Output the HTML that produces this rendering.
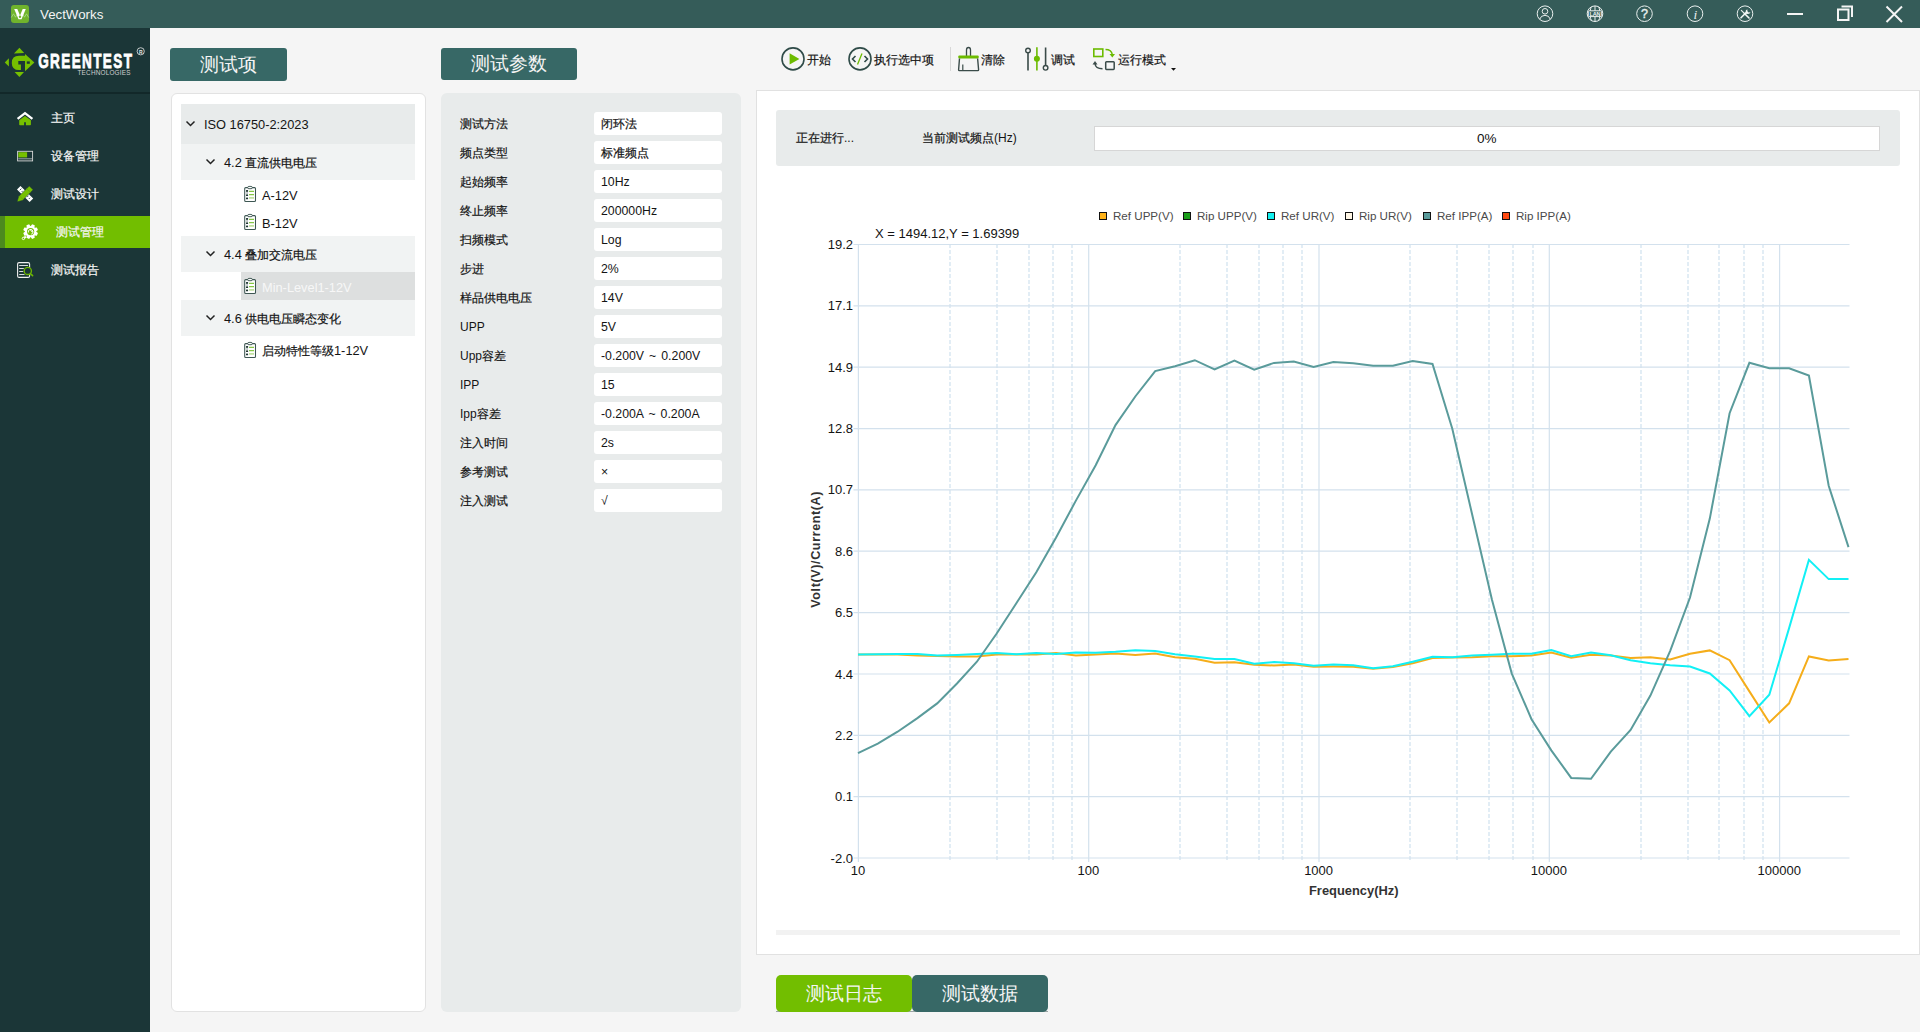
<!DOCTYPE html>
<html><head><meta charset="utf-8">
<style>
*{box-sizing:border-box;margin:0;padding:0}
html,body{width:1920px;height:1032px;overflow:hidden;background:#F5F5F5;font-family:"Liberation Sans",sans-serif;color:#111}
.a{position:absolute}
.t{position:absolute;white-space:nowrap;line-height:1}
#title{left:0;top:0;width:1920px;height:28px;background:#355C59}
#side{left:0;top:28px;width:150px;height:1004px;background:#1B3637}
.nav{position:absolute;left:0;width:150px;height:32px}
.nav .t{left:51px;top:10px;font-size:12.2px;color:#F6F6F6;-webkit-text-stroke:0.15px #F6F6F6}
.nk .k{-webkit-text-stroke:0}
.btnh{position:absolute;background:#376866;border-radius:3px;color:#F4F4F4;font-size:19px}
.tree{left:171px;top:93px;width:255px;height:919px;background:#fff;border:1px solid #E2E2E2;border-radius:6px}
.row{position:absolute;left:181px;width:234px}
.tx{font-size:12.8px;color:#141414}
.c{font-size:12px}
.param{left:441px;top:93px;width:300px;height:919px;background:#E8EBEB;border-radius:6px}
.lab{position:absolute;left:460px;font-size:12px;color:#141414}
.val{position:absolute;left:594px;width:128px;height:23px;background:#fff;border-radius:3px}
.val .t{left:7px;top:6px;font-size:12.3px;color:#141414;word-spacing:1.6px}
.tb{font-size:12px;color:#141414}
svg{position:absolute;left:0;top:0}
.mn{stroke:#E2EDF5;stroke-width:2;stroke-dasharray:4 2}
.mj{stroke:#D3E1ED;stroke-width:1.2}
.ln{fill:none;stroke-width:2;stroke-linejoin:miter}
.ax{font-size:13px;color:#141414}
.lg{font-size:11.6px;color:#4A4A4A}
.k{-webkit-text-stroke:0.2px currentColor}
</style></head><body>
<div id="title" class="a">
      <div class="t" style="left:40px;top:8px;font-size:13.3px;color:#F4F4F4">VectWorks</div>
</div>
<div id="side" class="a">
  <div class="a" style="left:0;top:64px;width:150px;height:2px;background:#122829"></div>
      <div class="nav" style="top:74px"><div class="t"><span class="k">主页</span></div></div>
  <div class="nav" style="top:112px"><div class="t"><span class="k">设备管理</span></div></div>
  <div class="nav" style="top:150px"><div class="t"><span class="k">测试设计</span></div></div>
  <div class="nav" style="top:188px;background:#72BE00"><div class="a" style="left:0;top:0;width:5px;height:32px;background:#4C8A1E"></div><div class="t" style="left:56px"><span class="k">测试管理</span></div></div>
  <div class="nav" style="top:226px"><div class="t"><span class="k">测试报告</span></div></div>
</div>

<div class="btnh nk" style="left:170px;top:48px;width:117px;height:33px"><div class="t" style="left:30px;top:7px"><span class="k">测试项</span></div></div>
<div class="btnh nk" style="left:441px;top:48px;width:136px;height:32px"><div class="t" style="left:30px;top:6px"><span class="k">测试参数</span></div></div>

<div class="a tree"></div>
<div class="row" style="top:104px;height:40px;background:#E8EBEB"><div class="t tx" style="left:23px;top:15px">ISO 16750-2:2023</div></div>
<div class="row" style="top:144px;height:36px;background:#F1F3F3"><div class="t tx" style="left:43px;top:13px">4.2 <span class="c"><span class="k">直流供电电压</span></span></div></div>
<div class="row" style="top:180px;height:28px"><div class="t tx" style="left:81px;top:9.5px">A-12V</div></div>
<div class="row" style="top:208px;height:28px"><div class="t tx" style="left:81px;top:9.5px">B-12V</div></div>
<div class="row" style="top:236px;height:36px;background:#F1F3F3"><div class="t tx" style="left:43px;top:13px">4.4 <span class="c"><span class="k">叠加交流电压</span></span></div></div>
<div class="row" style="top:272px;height:28px;left:241px;width:174px;background:#DDDFDF"><div class="t tx" style="left:21px;top:9.5px;color:#F7F7F7">Min-Level1-12V</div></div>
<div class="row" style="top:300px;height:36px;background:#F1F3F3"><div class="t tx" style="left:43px;top:13px">4.6 <span class="c"><span class="k">供电电压瞬态变化</span></span></div></div>
<div class="row" style="top:336px;height:28px"><div class="t tx" style="left:81px;top:9px"><span class="c"><span class="k">启动特性等级</span></span>1-12V</div></div>

<div class="a param"></div>
<div class="lab t" style="top:118px"><span class="k">测试方法</span></div><div class="val" style="top:112px"><div class="t"><span class="k">闭环法</span></div></div>
<div class="lab t" style="top:147px"><span class="k">频点类型</span></div><div class="val" style="top:141px"><div class="t"><span class="k">标准频点</span></div></div>
<div class="lab t" style="top:176px"><span class="k">起始频率</span></div><div class="val" style="top:170px"><div class="t">10Hz</div></div>
<div class="lab t" style="top:205px"><span class="k">终止频率</span></div><div class="val" style="top:199px"><div class="t">200000Hz</div></div>
<div class="lab t" style="top:234px"><span class="k">扫频模式</span></div><div class="val" style="top:228px"><div class="t">Log</div></div>
<div class="lab t" style="top:263px"><span class="k">步进</span></div><div class="val" style="top:257px"><div class="t">2%</div></div>
<div class="lab t" style="top:292px"><span class="k">样品供电电压</span></div><div class="val" style="top:286px"><div class="t">14V</div></div>
<div class="lab t" style="top:321px">UPP</div><div class="val" style="top:315px"><div class="t">5V</div></div>
<div class="lab t" style="top:350px">Upp<span class="k">容差</span></div><div class="val" style="top:344px"><div class="t">-0.200V ~ 0.200V</div></div>
<div class="lab t" style="top:379px">IPP</div><div class="val" style="top:373px"><div class="t">15</div></div>
<div class="lab t" style="top:408px">Ipp<span class="k">容差</span></div><div class="val" style="top:402px"><div class="t">-0.200A ~ 0.200A</div></div>
<div class="lab t" style="top:437px"><span class="k">注入时间</span></div><div class="val" style="top:431px"><div class="t">2s</div></div>
<div class="lab t" style="top:466px"><span class="k">参考测试</span></div><div class="val" style="top:460px"><div class="t">×</div></div>
<div class="lab t" style="top:495px"><span class="k">注入测试</span></div><div class="val" style="top:489px"><div class="t">√</div></div>

<!-- toolbar -->
<div class="t tb" style="left:807px;top:53.5px"><span class="k">开始</span></div>
<div class="t tb" style="left:874px;top:53.5px"><span class="k">执行选中项</span></div>
<div class="a" style="left:950px;top:47px;width:1px;height:24px;background:#D8D8D8"></div>
<div class="t tb" style="left:981px;top:53.5px"><span class="k">清除</span></div>
<div class="t tb" style="left:1051px;top:53.5px"><span class="k">调试</span></div>
<div class="t tb" style="left:1118px;top:53.5px"><span class="k">运行模式</span></div>

<!-- chart panel -->
<div class="a" style="left:756px;top:90px;width:1164px;height:865px;background:#fff;border:1px solid #E1E1E1"></div>
<div class="a" style="left:776px;top:110px;width:1124px;height:56px;background:#E8EBEB;border-radius:3px"></div>
<div class="t tb" style="left:796px;top:132px"><span class="k">正在进行</span>...</div>
<div class="t tb" style="left:922px;top:132px"><span class="k">当前测试频点</span>(Hz)</div>
<div class="a" style="left:1094px;top:126px;width:786px;height:25px;background:#fff;border:1px solid #D6D6D6"></div>
<div class="t" style="left:1477px;top:131.5px;font-size:13.5px">0%</div>
<div class="a" style="left:776px;top:930px;width:1124px;height:5px;background:#F2F2F2"></div>

<svg width="1920" height="1032">
<line x1="950" y1="244" x2="950" y2="862.0" class="mn"/>
<line x1="997" y1="244" x2="997" y2="862.0" class="mn"/>
<line x1="1029" y1="244" x2="1029" y2="862.0" class="mn"/>
<line x1="1053" y1="244" x2="1053" y2="862.0" class="mn"/>
<line x1="1072" y1="244" x2="1072" y2="862.0" class="mn"/>
<line x1="1180" y1="244" x2="1180" y2="862.0" class="mn"/>
<line x1="1227" y1="244" x2="1227" y2="862.0" class="mn"/>
<line x1="1259" y1="244" x2="1259" y2="862.0" class="mn"/>
<line x1="1283" y1="244" x2="1283" y2="862.0" class="mn"/>
<line x1="1302" y1="244" x2="1302" y2="862.0" class="mn"/>
<line x1="1410" y1="244" x2="1410" y2="862.0" class="mn"/>
<line x1="1457" y1="244" x2="1457" y2="862.0" class="mn"/>
<line x1="1489" y1="244" x2="1489" y2="862.0" class="mn"/>
<line x1="1513" y1="244" x2="1513" y2="862.0" class="mn"/>
<line x1="1533" y1="244" x2="1533" y2="862.0" class="mn"/>
<line x1="1641" y1="244" x2="1641" y2="862.0" class="mn"/>
<line x1="1688" y1="244" x2="1688" y2="862.0" class="mn"/>
<line x1="1719" y1="244" x2="1719" y2="862.0" class="mn"/>
<line x1="1744" y1="244" x2="1744" y2="862.0" class="mn"/>
<line x1="1763" y1="244" x2="1763" y2="862.0" class="mn"/>
<line x1="858.4" y1="244.5" x2="858.4" y2="862.0" class="mj"/>
<line x1="1088.7" y1="244.5" x2="1088.7" y2="862.0" class="mj"/>
<line x1="1319.0" y1="244.5" x2="1319.0" y2="862.0" class="mj"/>
<line x1="1549.3" y1="244.5" x2="1549.3" y2="862.0" class="mj"/>
<line x1="1779.6" y1="244.5" x2="1779.6" y2="862.0" class="mj"/>
<line x1="853.5" y1="244.5" x2="1849.5" y2="244.5" class="mj"/>
<line x1="853.5" y1="305.9" x2="1849.5" y2="305.9" class="mj"/>
<line x1="853.5" y1="367.2" x2="1849.5" y2="367.2" class="mj"/>
<line x1="853.5" y1="428.6" x2="1849.5" y2="428.6" class="mj"/>
<line x1="853.5" y1="489.9" x2="1849.5" y2="489.9" class="mj"/>
<line x1="853.5" y1="551.2" x2="1849.5" y2="551.2" class="mj"/>
<line x1="853.5" y1="612.6" x2="1849.5" y2="612.6" class="mj"/>
<line x1="853.5" y1="674.0" x2="1849.5" y2="674.0" class="mj"/>
<line x1="853.5" y1="735.3" x2="1849.5" y2="735.3" class="mj"/>
<line x1="853.5" y1="796.6" x2="1849.5" y2="796.6" class="mj"/>
<line x1="853.5" y1="858.0" x2="1849.5" y2="858.0" class="mj"/>
<polyline class="ln" stroke="#F5AD1A" points="858.0,654.6 877.8,654.5 897.6,654.6 917.4,655.6 937.2,656.0 957.0,656.5 976.9,656.5 996.7,654.5 1016.5,654.4 1036.3,654.5 1056.1,653.0 1075.9,655.6 1095.7,654.4 1115.5,653.5 1135.3,654.9 1155.2,653.5 1175.0,657.3 1194.8,658.7 1214.6,662.7 1234.4,662.3 1254.2,664.8 1274.0,665.5 1293.8,664.4 1313.6,666.7 1333.4,666.5 1353.2,666.7 1373.1,668.7 1392.9,667.0 1412.7,663.3 1432.5,658.0 1452.3,657.5 1472.1,657.2 1491.9,656.3 1511.7,656.2 1531.5,655.5 1551.3,652.5 1571.2,657.8 1591.0,654.7 1610.8,655.5 1630.6,658.0 1650.4,657.3 1670.2,659.4 1690.0,653.8 1709.8,650.4 1729.6,660.2 1749.4,691.4 1769.3,722.5 1789.1,703.3 1808.9,656.4 1828.7,660.6 1848.5,658.9"/>
<polyline class="ln" stroke="#12F0F5" points="858.0,654.6 877.8,654.2 897.6,654.1 917.4,654.0 937.2,655.6 957.0,654.9 976.9,654.1 996.7,653.0 1016.5,654.2 1036.3,653.1 1056.1,654.0 1075.9,652.5 1095.7,652.8 1115.5,651.8 1135.3,650.3 1155.2,651.1 1175.0,654.2 1194.8,656.5 1214.6,659.0 1234.4,659.0 1254.2,663.7 1274.0,662.1 1293.8,663.3 1313.6,665.7 1333.4,664.5 1353.2,665.3 1373.1,668.3 1392.9,666.3 1412.7,661.7 1432.5,656.7 1452.3,657.2 1472.1,655.5 1491.9,654.7 1511.7,653.8 1531.5,653.8 1551.3,650.0 1571.2,656.3 1591.0,652.5 1610.8,655.3 1630.6,660.2 1650.4,663.2 1670.2,665.3 1690.0,666.6 1709.8,673.5 1729.6,690.5 1749.4,716.1 1769.3,694.8 1789.1,628.1 1808.9,559.9 1828.7,579.1 1848.5,579.1"/>
<polyline class="ln" stroke="#5A9B9B" points="858.0,753.1 877.8,743.7 897.6,731.7 917.4,718.1 937.2,703.4 957.0,683.5 976.9,661.7 996.7,633.5 1016.5,603.0 1036.3,572.2 1056.1,537.5 1075.9,500.6 1095.7,465.3 1115.5,425.1 1135.3,396.5 1155.2,371.1 1175.0,366.2 1194.8,360.2 1214.6,369.4 1234.4,360.7 1254.2,369.7 1274.0,362.9 1293.8,361.5 1313.6,367.0 1333.4,362.1 1353.2,363.2 1373.1,365.8 1392.9,365.8 1412.7,361.0 1432.5,364.0 1452.3,428.8 1472.1,514.2 1491.9,599.6 1511.7,673.3 1531.5,719.2 1551.3,750.4 1571.2,777.9 1591.0,778.8 1610.8,751.7 1630.6,729.9 1650.4,695.6 1670.2,650.8 1690.0,597.5 1709.8,518.6 1729.6,413.2 1749.4,362.8 1769.3,368.3 1789.1,368.3 1808.9,375.6 1828.7,485.7 1848.5,547.1"/>

</svg>

<div class="t ax" style="left:803px;width:50px;text-align:right;top:238.0px">19.2</div>
<div class="t ax" style="left:803px;width:50px;text-align:right;top:299.4px">17.1</div>
<div class="t ax" style="left:803px;width:50px;text-align:right;top:360.7px">14.9</div>
<div class="t ax" style="left:803px;width:50px;text-align:right;top:422.1px">12.8</div>
<div class="t ax" style="left:803px;width:50px;text-align:right;top:483.4px">10.7</div>
<div class="t ax" style="left:803px;width:50px;text-align:right;top:544.7px">8.6</div>
<div class="t ax" style="left:803px;width:50px;text-align:right;top:606.1px">6.5</div>
<div class="t ax" style="left:803px;width:50px;text-align:right;top:667.5px">4.4</div>
<div class="t ax" style="left:803px;width:50px;text-align:right;top:728.8px">2.2</div>
<div class="t ax" style="left:803px;width:50px;text-align:right;top:790.1px">0.1</div>
<div class="t ax" style="left:803px;width:50px;text-align:right;top:851.5px">-2.0</div>
<div class="t ax" style="left:818.0px;width:80px;text-align:center;top:864px">10</div>
<div class="t ax" style="left:1048.3px;width:80px;text-align:center;top:864px">100</div>
<div class="t ax" style="left:1278.6px;width:80px;text-align:center;top:864px">1000</div>
<div class="t ax" style="left:1508.9px;width:80px;text-align:center;top:864px">10000</div>
<div class="t ax" style="left:1739.2px;width:80px;text-align:center;top:864px">100000</div>
<div class="a" style="left:1099px;top:212px;width:8px;height:8px;background:#FFB31A;border:1px solid #111"></div><div class="t lg" style="left:1113px;top:209.5px">Ref UPP(V)</div>
<div class="a" style="left:1183px;top:212px;width:8px;height:8px;background:#1A9F1A;border:1px solid #111"></div><div class="t lg" style="left:1197px;top:209.5px">Rip UPP(V)</div>
<div class="a" style="left:1267px;top:212px;width:8px;height:8px;background:#12F0F0;border:1px solid #111"></div><div class="t lg" style="left:1281px;top:209.5px">Ref UR(V)</div>
<div class="a" style="left:1345px;top:212px;width:8px;height:8px;background:#FFF6E5;border:1px solid #111"></div><div class="t lg" style="left:1359px;top:209.5px">Rip UR(V)</div>
<div class="a" style="left:1423px;top:212px;width:8px;height:8px;background:#5A9B9B;border:1px solid #111"></div><div class="t lg" style="left:1437px;top:209.5px">Ref IPP(A)</div>
<div class="a" style="left:1502px;top:212px;width:8px;height:8px;background:#FF4A12;border:1px solid #111"></div><div class="t lg" style="left:1516px;top:209.5px">Rip IPP(A)</div>
<div class="t ax" style="left:875px;top:227px">X = 1494.12,Y = 1.69399</div>
<div class="t" style="left:1309px;top:884.5px;font-size:12.9px;font-weight:bold;color:#333">Frequency(Hz)</div>
<div class="t" style="left:759px;top:544px;width:115px;text-align:center;font-size:12.6px;letter-spacing:0.6px;font-weight:bold;color:#333;transform:rotate(-90deg)">Volt(V)/Current(A)</div>

<svg width="1920" height="1032" style="z-index:5;pointer-events:none">
<!-- app icon -->
<rect x="11" y="5" width="18" height="18" rx="3" fill="#70B42C"/>
<path d="M11.3 17.5 L13.5 13.8 L15.5 17.2 L17.5 13.5 L20 17.5 L22.5 13.5 L24.5 17.2 L26.5 13.8 L28.7 17.5" fill="none" stroke="#A9D98A" stroke-width="0.8"/>
<path d="M14.2 9 L17.3 9 L20 15.5 L22.7 9 L25.8 9 L21.5 19.3 L18.5 19.3 Z" fill="#fff"/>
<circle cx="20" cy="16.8" r="1.2" fill="#70B42C"/>
<!-- title bar icons -->
<g fill="none" stroke="#EAF0EF" stroke-width="1">
<circle cx="1545" cy="13.7" r="7.8"/>
<circle cx="1545" cy="11.3" r="2.8"/>
<path d="M1539.6 19.3 Q1541 15.3 1545 15.3 Q1549 15.3 1550.4 19.3"/>
<circle cx="1595" cy="13.7" r="7.8"/>
<rect x="1588.3" y="10.8" width="13.4" height="5.8" rx="0.8"/><path d="M1595 6 V10.8 M1595 16.6 V21.5 M1591.3 7.3 Q1590.3 8.8 1590.3 10.8 M1598.7 7.3 Q1599.7 8.8 1599.7 10.8 M1591.3 20.1 Q1590.3 18.6 1590.3 16.6 M1598.7 20.1 Q1599.7 18.6 1599.7 16.6"/>
<circle cx="1644.5" cy="13.7" r="7.8"/>
<circle cx="1695" cy="13.7" r="7.8"/>
<circle cx="1745" cy="13.7" r="7.8"/>
</g>
<text x="1595" y="15.8" font-family="Liberation Sans" font-size="5.6" font-weight="bold" fill="#EAF0EF" text-anchor="middle" textLength="11">LAN</text>
<text x="1644.5" y="18.2" font-family="Liberation Sans" font-size="12.5" fill="#EAF0EF" stroke="#EAF0EF" stroke-width="0.4" text-anchor="middle">?</text>
<text x="1695.5" y="18.8" font-family="Liberation Serif" font-size="13.5" font-style="italic" fill="#EAF0EF" text-anchor="middle">i</text>
<path d="M1741.3 10.3 L1745 14" stroke="#EAF0EF" stroke-width="1.1" stroke-linecap="round"/>
<path d="M1744.5 13.5 L1749 18" stroke="#F4F8F7" stroke-width="1.6" stroke-linecap="round"/>
<path d="M1741 17.8 L1746.5 12.3" stroke="#F4F8F7" stroke-width="1.6" stroke-linecap="round"/>
<path d="M1745.6 13.2 L1745.8 10.6 L1747.3 9.2 L1747.4 11.3 L1748.6 12.4 L1750.6 12.3 L1749.2 13.8 L1746.6 14 Z" fill="#F4F8F7"/>
<g stroke="#F4F4F4" stroke-width="2" fill="none">
<path d="M1787 14 H1803"/>
<rect x="1838" y="9.5" width="10.5" height="10.5"/>
<path d="M1841.5 6.5 H1852 V17"/>
</g>
<path d="M1886.5 6.5 L1902 22 M1902 6.5 L1886.5 22" stroke="#F4F4F4" stroke-width="2"/>

<!-- logo -->
<g fill="#76C000">
<path d="M19.4 47.8 L24.2 52.9 L14 53.5 Z"/>
<path d="M4.8 62.4 L8.9 58.3 L8.9 66.5 Z"/>
<path d="M25 54 L34.4 62.4 L25 71.2 Z"/>
<path d="M14.6 72 L24 72 L19.4 77.1 Z"/>
<path d="M19 55.8 H26 V61 H18.3 V64.4 H20.9 V70 H19 Q11.8 70 11.8 62.9 Q11.8 55.8 19 55.8 Z"/>
</g>
<rect x="26.8" y="61.4" width="3" height="2.4" fill="#1B3637"/>
<text x="38.2" y="68.3" font-family="Liberation Sans" font-size="20.5" font-weight="bold" fill="#fff" stroke="#fff" stroke-width="0.8" transform="translate(38.2 0) scale(0.66 1) translate(-38.2 0)" textLength="142">GREENTEST</text>
<text x="77.5" y="74.9" font-family="Liberation Sans" font-size="6.4" fill="#D0D0D0" textLength="53">TECHNOLOGIES</text>
<circle cx="140.7" cy="51.3" r="3.6" fill="none" stroke="#E8E8E8" stroke-width="0.8"/>
<text x="140.7" y="53.5" font-family="Liberation Sans" font-size="5" font-weight="bold" fill="#E8E8E8" text-anchor="middle">R</text>

<!-- nav icons -->
<path d="M17.6 118.9 L25 113.1 L32.4 118.9" fill="none" stroke="#fff" stroke-width="2.3" stroke-linejoin="miter"/>
<path d="M19.2 120.2 L25 115.9 L30.9 120.2 V124.4 Q30.9 125.2 30.1 125.2 H25.9 V122.2 H24.1 V125.2 H20 Q19.2 125.2 19.2 124.4 Z" fill="#76C000"/>
<rect x="17.6" y="151.3" width="15" height="9.6" fill="none" stroke="#D8D8D8" stroke-width="0.9"/>
<rect x="18.3" y="152.2" width="8.8" height="5.2" fill="#76C000"/>
<path d="M18.3 158.8 H32" stroke="#D8D8D8" stroke-width="0.7"/>
<!-- pencil ruler -->
<path d="M17 189.6 L20.5 186 L33.2 198.5 L29.6 202 Z" fill="#fff"/>
<path d="M19.8 190.2 l1.6 -1.6 M21.6 192 l1.2 -1.2 M27 197.2 l1.6 -1.6 M28.8 199 l1.2 -1.2" stroke="#1B3637" stroke-width="0.8"/>
<path d="M29.3 186 L33.1 189.8 L22.4 200.4 L17.1 201.8 L18.6 196.6 Z" fill="#76C000" stroke="#1B3637" stroke-width="0.5"/>
<path d="M26.6 188.6 L30.4 192.4 M19.4 195.8 L23.2 199.6" stroke="#5E9A10" stroke-width="0.6"/>
<!-- gear (active) -->
<g>
<path d="M30.85 225.91 L32.10 224.25 L34.74 225.35 L34.45 227.40 L34.80 227.75 L36.85 227.46 L37.95 230.10 L36.29 231.35 L36.29 231.85 L37.95 233.10 L36.85 235.74 L34.80 235.45 L34.45 235.80 L34.74 237.85 L32.10 238.95 L30.85 237.29 L30.35 237.29 L29.10 238.95 L26.46 237.85 L26.75 235.80 L26.40 235.45 L24.35 235.74 L23.25 233.10 L24.91 231.85 L24.91 231.35 L23.25 230.10 L24.35 227.46 L26.40 227.75 L26.75 227.40 L26.46 225.35 L29.10 224.25 L30.35 225.91 Z" fill="#fff"/>
<circle cx="30.6" cy="231.6" r="3.6" fill="#72BE00"/>
<path d="M28.3 232.5 A2.4 2.4 0 1 1 31.2 234.2" fill="none" stroke="#fff" stroke-width="1"/>
<path d="M30.2 229.2 L31.6 231.6 L33 231" stroke="#fff" stroke-width="1" fill="none"/>
<path d="M25.8 236.4 L23.6 238.4" stroke="#fff" stroke-width="2"/>
<circle cx="23.4" cy="238.4" r="1.2" fill="#72BE00" stroke="#fff" stroke-width="0.9"/>
</g>
<!-- report -->
<rect x="17.6" y="262.6" width="12" height="14.8" rx="1.5" fill="none" stroke="#F0F0F0" stroke-width="1.1"/>
<path d="M19.2 265.5 H28 M19.2 268.5 H23.8 M19.2 271.5 H23.3 M19.2 274.5 H24.5" stroke="#D8DCDC" stroke-width="1"/>
<circle cx="27.8" cy="270.9" r="3.6" fill="#1B3637" stroke="#6DB800" stroke-width="1.3"/>
<path d="M30.3 273.5 L32.6 275.7" stroke="#6DB800" stroke-width="1.6" stroke-linecap="round"/>
<!-- tree chevrons -->
<g fill="none" stroke="#222" stroke-width="1.5">
<path d="M186.5 121.5 L190.5 125.5 L194.5 121.5"/>
<path d="M206.5 159.5 L210.5 163.5 L214.5 159.5"/>
<path d="M206.5 251.5 L210.5 255.5 L214.5 251.5"/>
<path d="M206.5 315.5 L210.5 319.5 L214.5 315.5"/>
</g>
<!-- clipboards -->
<g id="clip">
<rect x="244.7" y="187.6" width="10.8" height="13.9" rx="1" fill="#fff" stroke="#3D5652" stroke-width="1.05"/>
<rect x="247.7" y="186.4" width="4.6" height="2.3" rx="1.15" fill="#fff" stroke="#3D5652" stroke-width="0.95"/>
<path d="M247.05 191.2 V195.6" stroke="#8A9896" stroke-width="1"/>
<rect x="246" y="190.1" width="2.1" height="1.7" rx="0.5" fill="#1F3532"/>
<rect x="246" y="194.6" width="2.1" height="1.5" rx="0.5" fill="#1F3532"/>
<rect x="246" y="197.6" width="2.1" height="1.7" rx="0.6" fill="#1F3532"/>
<path d="M249 191.4 h5 M249 194.6 h5" stroke="#86C646" stroke-width="1.2"/>
<path d="M249 197.9 h5" stroke="#B6DC90" stroke-width="1.5"/>
</g>
<use href="#clip" y="28"/>
<use href="#clip" y="92"/>
<use href="#clip" y="156"/>

<!-- toolbar icons -->
<circle cx="793" cy="58.9" r="11" fill="none" stroke="#2F4B48" stroke-width="1.6"/>
<path d="M789.6 53.3 L799.4 59 L789.6 64.6 Z" fill="#6CBB00"/>
<circle cx="860" cy="58.9" r="11" fill="none" stroke="#2F4B48" stroke-width="1.6"/>
<path d="M855.5 56 L852.5 59 L855.5 62 M864.5 56 L867.5 59 L864.5 62" fill="none" stroke="#2E4A47" stroke-width="1.6"/>
<path d="M862 53.5 L857.5 64.5" stroke="#6CBB00" stroke-width="1.3"/>
<!-- broom -->
<path d="M966.5 56 V50 Q966.5 47.5 968.5 47.5 Q970.5 47.5 970.5 50 V56" fill="none" stroke="#3A4B49" stroke-width="1.3"/>
<rect x="958.3" y="55.6" width="20.4" height="2.8" rx="1" fill="#6CBB00"/>
<path d="M959.5 58.5 L958.6 69.8 Q958.6 70.6 959.4 70.6 H977.8 Q978.6 70.6 978.6 69.8 L977.6 58.5" fill="none" stroke="#3A4B49" stroke-width="1.4"/>
<path d="M962.8 70 V64.5" stroke="#3A4B49" stroke-width="1.2"/>
<!-- sliders -->
<path d="M1028 53 V70.5 M1045.6 47.5 V65.3" stroke="#3A4B49" stroke-width="1.6"/>
<circle cx="1028" cy="50.5" r="2.3" fill="none" stroke="#3A4B49" stroke-width="1.4"/>
<circle cx="1045.6" cy="67.8" r="2.3" fill="none" stroke="#3A4B49" stroke-width="1.4"/>
<path d="M1036.9 47.2 V70.6" stroke="#6CBB00" stroke-width="1.6"/>
<circle cx="1036.9" cy="58.8" r="3" fill="#6CBB00"/>
<!-- run mode -->
<rect x="1093.8" y="49" width="9" height="7.5" fill="none" stroke="#6CBB00" stroke-width="1.6"/>
<path d="M1105.5 49.5 Q1111.5 49.5 1112.3 54.5" fill="none" stroke="#6CBB00" stroke-width="1.5"/>
<path d="M1109.5 54 L1115 54 L1112.3 57.5 Z" fill="#6CBB00"/>
<rect x="1105.7" y="61.8" width="8.5" height="7.6" rx="0.8" fill="none" stroke="#3A4B49" stroke-width="1.5"/>
<path d="M1102.5 68.8 Q1095.5 68.8 1095 63.5" fill="none" stroke="#3A4B49" stroke-width="1.5"/>
<path d="M1092.5 64.5 L1095 61 L1097.5 64.5 Z" fill="#3A4B49"/>
<path d="M1171 68 H1176 L1173.5 70.8 Z" fill="#111"/>
</svg>

<!-- tabs -->
<div class="a" style="left:776px;top:1011px;width:272px;height:1px;background:#9AA5A4"></div>
<div class="a nk" style="left:776px;top:975px;width:136px;height:37px;background:#72BE00;border-radius:5px"><div class="t" style="left:30px;top:9px;font-size:19px;color:#F6F6F6"><span class="k">测试日志</span></div></div>
<div class="a nk" style="left:912px;top:975px;width:136px;height:37px;background:#376866;border-radius:5px"><div class="t" style="left:30px;top:9px;font-size:19px;color:#F6F6F6"><span class="k">测试数据</span></div></div>
</body></html>
